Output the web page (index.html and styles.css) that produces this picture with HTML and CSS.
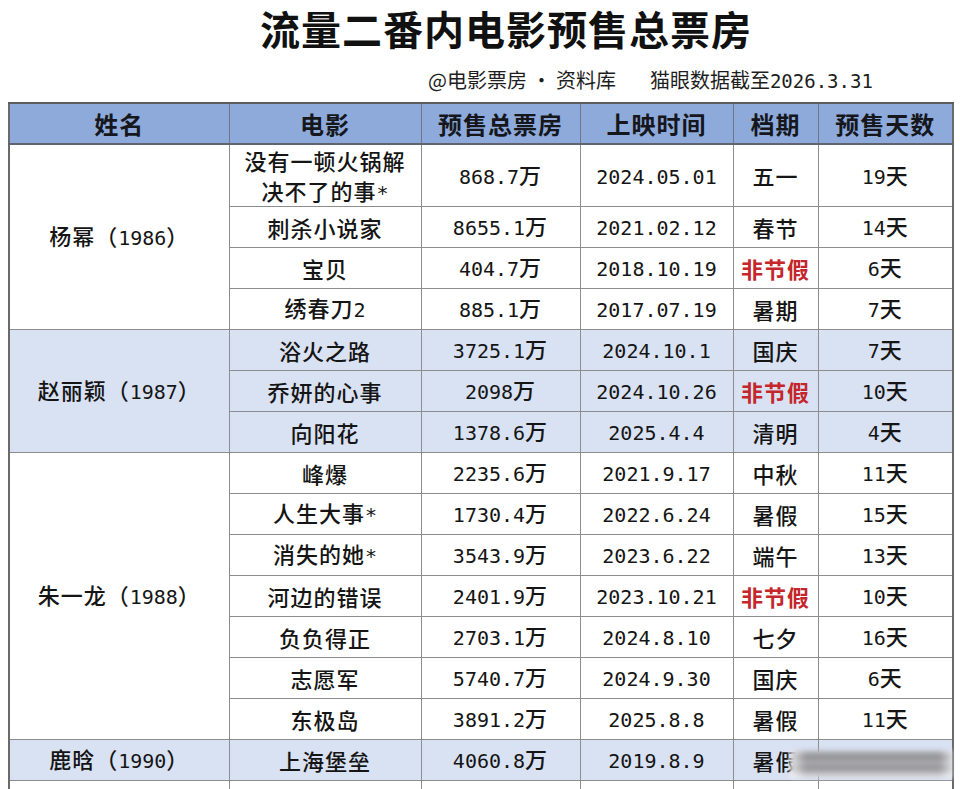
FILE: index.html
```html
<!DOCTYPE html>
<html lang="zh-CN">
<head>
<meta charset="utf-8">
<title>流量二番内电影预售总票房</title>
<link rel="stylesheet" href="styles.css">
</head>
<body>
<div class="page">
  <h1 class="title">流量二番内电影预售总票房</h1>
  <div class="sub">
    <span>@电影票房 · 资料库</span>
    <span>猫眼数据截至<span class="n">2026.3.31</span></span>
  </div>
  <table class="sheet">
    <colgroup>
      <col class="c1"><col class="c2"><col class="c3"><col class="c4"><col class="c5"><col class="c6">
    </colgroup>
    <thead>
      <tr class="head">
        <th>姓名</th><th>电影</th><th>预售总票房</th><th>上映时间</th><th>档期</th><th>预售天数</th>
      </tr>
    </thead>
    <tbody>
      <tr class="tall">
        <td rowspan="4">杨幂（<span class="n">1986</span>）</td>
        <td class="two"><span class="ln">没有一顿火锅解</span><span class="ln">决不了的事<span class="n">*</span></span></td>
        <td><span class="n">868.7</span>万</td><td><span class="n">2024.05.01</span></td><td>五一</td><td><span class="n">19</span>天</td>
      </tr>
      <tr><td>刺杀小说家</td><td><span class="n">8655.1</span>万</td><td><span class="n">2021.02.12</span></td><td>春节</td><td><span class="n">14</span>天</td></tr>
      <tr><td>宝贝</td><td><span class="n">404.7</span>万</td><td><span class="n">2018.10.19</span></td><td class="red">非节假</td><td><span class="n">6</span>天</td></tr>
      <tr><td>绣春刀<span class="n">2</span></td><td><span class="n">885.1</span>万</td><td><span class="n">2017.07.19</span></td><td>暑期</td><td><span class="n">7</span>天</td></tr>

      <tr class="blue">
        <td rowspan="3">赵丽颖（<span class="n">1987</span>）</td>
        <td>浴火之路</td><td><span class="n">3725.1</span>万</td><td><span class="n">2024.10.1</span></td><td>国庆</td><td><span class="n">7</span>天</td>
      </tr>
      <tr class="blue"><td>乔妍的心事</td><td><span class="n">2098</span>万</td><td><span class="n">2024.10.26</span></td><td class="red">非节假</td><td><span class="n">10</span>天</td></tr>
      <tr class="blue"><td>向阳花</td><td><span class="n">1378.6</span>万</td><td><span class="n">2025.4.4</span></td><td>清明</td><td><span class="n">4</span>天</td></tr>

      <tr>
        <td rowspan="7">朱一龙（<span class="n">1988</span>）</td>
        <td>峰爆</td><td><span class="n">2235.6</span>万</td><td><span class="n">2021.9.17</span></td><td>中秋</td><td><span class="n">11</span>天</td>
      </tr>
      <tr><td>人生大事<span class="n">*</span></td><td><span class="n">1730.4</span>万</td><td><span class="n">2022.6.24</span></td><td>暑假</td><td><span class="n">15</span>天</td></tr>
      <tr><td>消失的她<span class="n">*</span></td><td><span class="n">3543.9</span>万</td><td><span class="n">2023.6.22</span></td><td>端午</td><td><span class="n">13</span>天</td></tr>
      <tr><td>河边的错误</td><td><span class="n">2401.9</span>万</td><td><span class="n">2023.10.21</span></td><td class="red">非节假</td><td><span class="n">10</span>天</td></tr>
      <tr><td>负负得正</td><td><span class="n">2703.1</span>万</td><td><span class="n">2024.8.10</span></td><td>七夕</td><td><span class="n">16</span>天</td></tr>
      <tr><td>志愿军</td><td><span class="n">5740.7</span>万</td><td><span class="n">2024.9.30</span></td><td>国庆</td><td><span class="n">6</span>天</td></tr>
      <tr><td>东极岛</td><td><span class="n">3891.2</span>万</td><td><span class="n">2025.8.8</span></td><td>暑假</td><td><span class="n">11</span>天</td></tr>

      <tr class="blue">
        <td>鹿晗（<span class="n">1990</span>）</td>
        <td>上海堡垒</td><td><span class="n">4060.8</span>万</td><td><span class="n">2019.8.9</span></td><td>暑假</td><td></td>
      </tr>
      <tr><td></td><td></td><td></td><td></td><td></td><td></td></tr>
    </tbody>
  </table>
  <div class="wm"></div>
</div>
</body>
</html>
```

FILE: styles.css
```css
html, body {
  margin: 0;
  padding: 0;
  background: #ffffff;
}

body {
  font-family: "Noto Sans CJK SC", "Noto Sans", sans-serif;
  color: #141414;
}

.page {
  position: relative;
  width: 960px;
}

.title {
  margin: 0;
  height: 56px;
  padding-left: 52px;
  text-align: center;
  font-size: 40px;
  line-height: 56px;
  font-weight: 700;
  letter-spacing: 1px;
  color: #111111;
}

.sub {
  display: flex;
  align-items: center;
  gap: 34px;
  height: 46px;
  padding-left: 428px;
  font-size: 20px;
  color: #1e1e1e;
}

.sub .n {
  font-size: 19px;
}

.n {
  font-family: "DejaVu Sans Mono", "Liberation Mono", monospace;
  font-size: 20px;
  letter-spacing: 0;
}

.sheet {
  width: 944px;
  margin-left: 8px;
  table-layout: fixed;
  border-collapse: collapse;
  border: 2px solid #6a6a6a;
}

.c1 { width: 220px; }
.c2 { width: 192px; }
.c3 { width: 159px; }
.c4 { width: 153px; }
.c5 { width: 85px; }
.c6 { width: 135px; }

.head {
  height: 42px;
}

.sheet th {
  background: #8eaadb;
  border: 1px solid #6f7787;
  border-top: 2px solid #5c5c5c;
  border-bottom: 2px solid #5f6470;
  padding: 0;
  font-size: 24px;
  font-weight: 700;
  letter-spacing: 1px;
  color: #15171c;
}

.sheet tr {
  height: 41px;
}

.sheet tr.tall {
  height: 62px;
}

.sheet td {
  border: 1px solid #8d8d8d;
  padding: 0;
  text-align: center;
  vertical-align: middle;
  font-size: 22px;
  font-weight: 500;
  letter-spacing: 1px;
  line-height: 28px;
  color: #151515;
}

.sheet td.two {
  line-height: 30px;
}

.ln {
  display: block;
  height: 30px;
}

.sheet tr.blue td {
  background: #d9e2f3;
}

.sheet td.red {
  color: #c4262b;
  font-weight: 700;
}

.wm {
  position: absolute;
  left: 790px;
  top: 750px;
  width: 162px;
  height: 28px;
  background:
    linear-gradient(90deg, rgba(255,255,255,0.7) 0%, rgba(255,255,255,0) 10%, rgba(255,255,255,0) 92%, rgba(255,255,255,0.6) 100%),
    linear-gradient(180deg, #c4c4ca 0%, #8e8e93 25%, #acacb0 45%, #949498 65%, #c2c2c7 85%, #e2e2e6 100%);
  filter: blur(2px);
}
```
